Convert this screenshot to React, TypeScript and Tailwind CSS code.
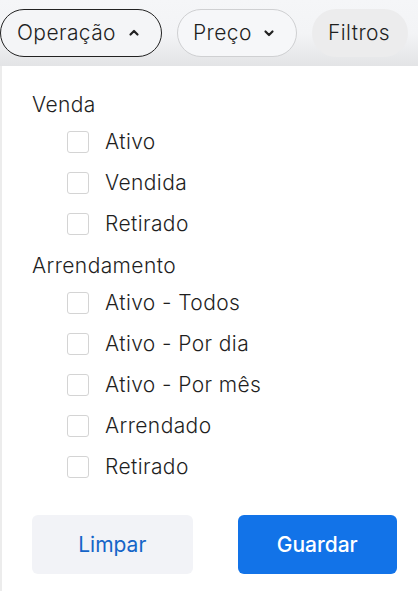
import { useState } from "react";

const SECTIONS = [
  { title: "Venda", items: ["Ativo", "Vendida", "Retirado"] },
  {
    title: "Arrendamento",
    items: ["Ativo - Todos", "Ativo - Por dia", "Ativo - Por mês", "Arrendado", "Retirado"],
  },
];

function Chevron({ up }: { up?: boolean }) {
  return (
    <svg width="12" height="12" viewBox="0 0 12 12" className={up ? "rotate-180" : ""}>
      <path d="M2.5 4.5 6 8l3.5-3.5" fill="none" stroke="#222" strokeWidth="2.2" strokeLinecap="round" strokeLinejoin="round" />
    </svg>
  );
}

export default function App() {
  const [checked, setChecked] = useState<Record<string, boolean>>({});

  return (
    <div className="w-[418px] h-[591px] bg-white overflow-hidden text-[#1f1f1f]" style={{ fontFamily: "Inter, 'Liberation Sans', sans-serif" }}>
      {/* Filter chips */}
      <div className="h-[66px] flex items-center gap-[15px] bg-gradient-to-b from-[#f5f6f8] via-[#f3f4f6] to-[#e3e4e6]">
        <button className="h-[48px] w-[162px] pl-[16px] flex items-center gap-[12px] rounded-full border border-[#222] bg-[#f4f5f7] text-[21px] font-light tracking-[0.4px]">
          Operação <Chevron up />
        </button>
        <button className="h-[48px] w-[120px] pl-[15px] flex items-center gap-[11px] rounded-full border border-[#cfd0d2] bg-[#f6f7f9] text-[21px] font-light tracking-[0.4px]">
          Preço <Chevron />
        </button>
        <button className="h-[48px] w-[96px] pl-[16px] flex items-center rounded-full bg-[#ececed] text-[21px] font-light tracking-[0.4px]">
          Filtros
        </button>
      </div>

      {/* Dropdown panel */}
      <div className="border-l-2 border-[#ececec] pl-[30px] pr-[21px] pt-[25px] h-[525px]">
        {SECTIONS.map((section) => (
          <div key={section.title} className="mb-[8px]">
            <p className="text-[21px] font-light leading-[28px] mb-[2px] tracking-[0.4px]">{section.title}</p>
            <ul>
              {section.items.map((item) => {
                const key = section.title + item;
                return (
                  <li key={key} className="h-[41px] flex items-center pl-[35px]">
                    <label className="flex items-center gap-[16px] cursor-pointer">
                      <input
                        type="checkbox"
                        className="sr-only"
                        checked={!!checked[key]}
                        onChange={() => setChecked({ ...checked, [key]: !checked[key] })}
                      />
                      <span className="w-[22px] h-[22px] rounded-[3px] border border-[#d4d4d4] bg-white" />
                      <span className="text-[21px] font-light tracking-[0.4px]">{item}</span>
                    </label>
                  </li>
                );
              })}
            </ul>
          </div>
        ))}

        <div className="mt-[28px] flex gap-[45px]">
          <button className="w-[161px] h-[59px] rounded-[6px] bg-[#f2f3f7] text-[#1565c8] text-[21px]">
            Limpar
          </button>
          <button className="w-[160px] h-[59px] rounded-[6px] bg-[#1273e8] text-white text-[21px] font-medium">
            Guardar
          </button>
        </div>
      </div>
    </div>
  );
}
